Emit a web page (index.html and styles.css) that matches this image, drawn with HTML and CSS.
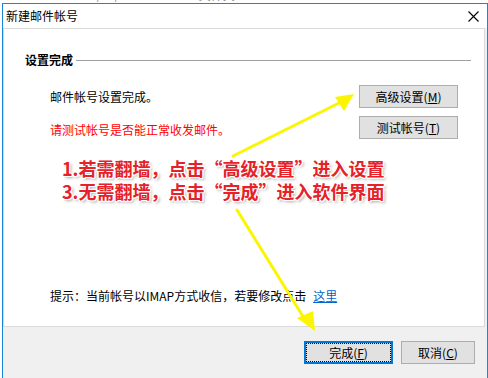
FILE: index.html
```html
<!DOCTYPE html>
<html lang="zh-CN">
<head>
<meta charset="utf-8">
<title>新建邮件帐号</title>
<link rel="stylesheet" href="styles.css">
</head>
<body>
<div class="bgstrip"><div class="bgtext"><span>2018/11/20 9:11</span><span class="bgtype">文件夹</span></div></div>
<div class="window">
  <div class="titlebar">
    <span class="title">新建邮件帐号</span>
    <svg class="close" width="11" height="11" viewBox="0 0 11 11"><path d="M0.5 0.5L10.5 10.5M10.5 0.5L0.5 10.5" stroke="#000" stroke-width="1.1" fill="none"/></svg>
  </div>
  <div class="panel">
    <div class="section-head"><span>设置完成</span><span class="rule"></span></div>
    <div class="rows">
      <div class="msg">邮件帐号设置完成。</div>
      <button class="btn">高级设置(<u>M</u>)</button>
      <div class="msg warn">请测试帐号是否能正常收发邮件。</div>
      <button class="btn">测试帐号(<u>T</u>)</button>
    </div>
    <div class="note">
      <div>1.若需翻墙，点击“高级设置”进入设置</div>
      <div>3.无需翻墙，点击“完成”进入软件界面</div>
    </div>
    <div class="hint">提示：当前帐号以IMAP方式收信，若要修改点击<a class="link">这里</a></div>
  </div>
  <div class="footer">
    <button class="btn btn-default">完成(<u>F</u>)</button>
    <button class="btn btn-cancel">取消(<u>C</u>)</button>
  </div>
</div>
<svg class="arrows" width="488" height="378" viewBox="0 0 488 378">
  <g stroke="#fbf500" stroke-width="3" stroke-linecap="round" fill="none">
    <path d="M233 156L341 102"/>
    <path d="M237 210L304 318"/>
  </g>
  <g fill="#fbf500">
    <polygon points="354,94 335,97 344,111"/>
    <polygon points="315,331 297,318 313,311"/>
  </g>
</svg>
</body>
</html>
```
FILE: styles.css
```css
html, body {
  margin: 0;
  padding: 0;
  background: #ffffff;
}
body {
  width: 488px;
  height: 378px;
  overflow: hidden;
  position: relative;
  font-family: "Noto Sans CJK SC", "Microsoft YaHei", sans-serif;
  font-size: 12px;
  color: #000;
}
.bgstrip {
  height: 3px;
  overflow: hidden;
}
.bgtext {
  margin-top: -12px;
  padding-left: 70px;
  line-height: 14px;
  color: #8a8a8a;
}
.bgtype {
  margin-left: 40px;
}
.window {
  margin-left: 2px;
  width: 486px;
  height: 375px;
  box-sizing: border-box;
  border: 1px solid #1b84d8;
  border-bottom: none;
  background: #f0f0f0;
  display: flex;
  flex-direction: column;
}
.titlebar {
  height: 24px;
  flex: none;
  background: #fff;
  display: flex;
  align-items: center;
  justify-content: space-between;
  padding: 0 8px 0 3px;
}
.title {
  line-height: 16px;
}
.close {
  display: block;
}
.panel {
  height: 299px;
  flex: none;
  box-sizing: border-box;
  margin-right: 2px;
  border: 1px solid #dadada;
  background: #fff;
  display: flex;
  flex-direction: column;
  padding: 23px 13px 22px 21px;
}
.section-head {
  display: flex;
  align-items: center;
  line-height: 16px;
  font-weight: bold;
}
.rule {
  flex: 1;
  height: 1px;
  background: #a0a0a0;
  margin-left: 3px;
}
.rows {
  display: grid;
  grid-template-columns: 1fr 99px;
  grid-auto-rows: 23px;
  row-gap: 8px;
  margin: 17px 13px 0 25px;
}
.msg {
  align-self: center;
  line-height: 16px;
}
.warn {
  color: #ff0000;
  padding-top: 5px;
}
.btn {
  font-family: "Noto Sans CJK SC", "Microsoft YaHei", sans-serif;
  font-size: 12px;
  color: #000;
  background: #e1e1e1;
  border: 1px solid #adadad;
  padding: 0;
  margin: 0;
  height: 23px;
  line-height: 16px;
  box-sizing: border-box;
}
.note {
  margin: 18px 0 0 37px;
  font-size: 18px;
  line-height: 23px;
  font-weight: bold;
  color: #e5212a;
  text-shadow: 1px 0 0 #fff, -1px 0 0 #fff, 0 1px 0 #fff, 0 -1px 0 #fff,
    1px 1px 0 #fff, -1px -1px 0 #fff, 1px -1px 0 #fff, -1px 1px 0 #fff,
    2px 2px 3px rgba(0, 0, 0, 0.35);
}
.hint {
  margin: auto 0 0 25px;
  line-height: 16px;
}
.link {
  color: #0066cc;
  text-decoration: underline;
  margin-left: 7px;
}
.footer {
  flex: 1;
  display: flex;
  justify-content: flex-end;
  align-items: flex-start;
  gap: 8px;
  padding: 14px 12px 0 0;
}
.btn-default {
  width: 89px;
  border: 1px solid #0078d7;
  box-shadow: inset 0 0 0 1px #0078d7;
  outline: 1px dotted #000;
  outline-offset: -3px;
}
.btn-cancel {
  width: 74px;
}
.arrows {
  position: absolute;
  left: 0;
  top: 0;
  pointer-events: none;
}
```
